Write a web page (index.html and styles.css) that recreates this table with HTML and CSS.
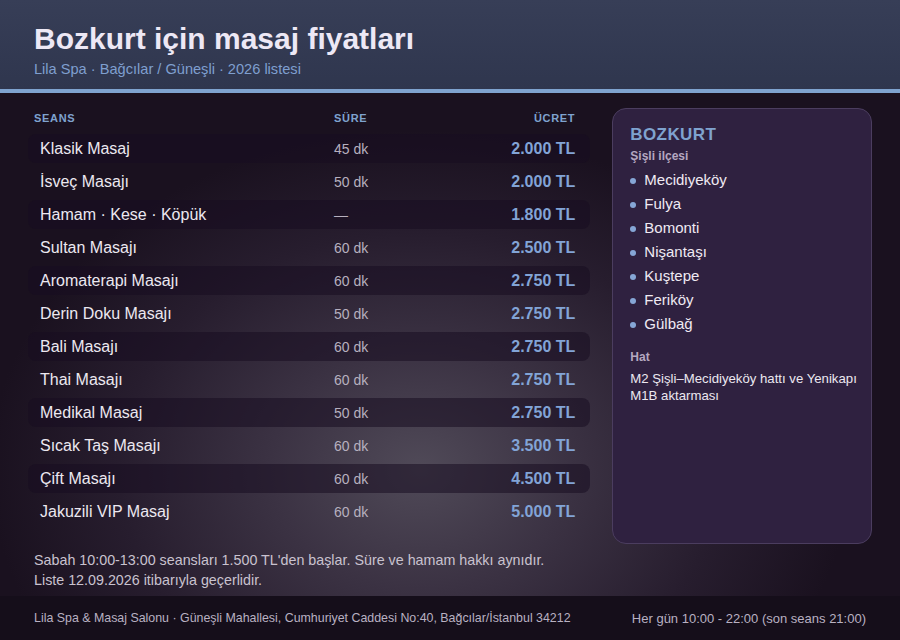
FILE: index.html
```html
<!DOCTYPE html>
<html lang="tr">
<head>
<meta charset="utf-8">
<link rel="stylesheet" href="styles.css">
</head>
<body>
<div class="page">
  <header class="header">
    <h1 class="title">Bozkurt için masaj fiyatları</h1>
    <div class="subtitle">Lila Spa · Bağcılar / Güneşli · 2026 listesi</div>
  </header>
  <main class="content">
    <section class="prices">
      <div class="row head">
        <span class="c-name">Seans</span><span class="c-dur">Süre</span><span class="c-price">Ücret</span>
      </div>
      <div class="row band"><span class="c-name">Klasik Masaj</span><span class="c-dur">45 dk</span><span class="c-price">2.000 TL</span></div>
      <div class="row"><span class="c-name">İsveç Masajı</span><span class="c-dur">50 dk</span><span class="c-price">2.000 TL</span></div>
      <div class="row band"><span class="c-name">Hamam · Kese · Köpük</span><span class="c-dur">—</span><span class="c-price">1.800 TL</span></div>
      <div class="row"><span class="c-name">Sultan Masajı</span><span class="c-dur">60 dk</span><span class="c-price">2.500 TL</span></div>
      <div class="row band"><span class="c-name">Aromaterapi Masajı</span><span class="c-dur">60 dk</span><span class="c-price">2.750 TL</span></div>
      <div class="row"><span class="c-name">Derin Doku Masajı</span><span class="c-dur">50 dk</span><span class="c-price">2.750 TL</span></div>
      <div class="row band"><span class="c-name">Bali Masajı</span><span class="c-dur">60 dk</span><span class="c-price">2.750 TL</span></div>
      <div class="row"><span class="c-name">Thai Masajı</span><span class="c-dur">60 dk</span><span class="c-price">2.750 TL</span></div>
      <div class="row band"><span class="c-name">Medikal Masaj</span><span class="c-dur">50 dk</span><span class="c-price">2.750 TL</span></div>
      <div class="row"><span class="c-name">Sıcak Taş Masajı</span><span class="c-dur">60 dk</span><span class="c-price">3.500 TL</span></div>
      <div class="row band"><span class="c-name">Çift Masajı</span><span class="c-dur">60 dk</span><span class="c-price">4.500 TL</span></div>
      <div class="row"><span class="c-name">Jakuzili VIP Masaj</span><span class="c-dur">60 dk</span><span class="c-price">5.000 TL</span></div>
    </section>
    <aside class="card">
      <div class="card-title">BOZKURT</div>
      <div class="card-label">Şişli ilçesi</div>
      <ul class="areas">
        <li>Mecidiyeköy</li>
        <li>Fulya</li>
        <li>Bomonti</li>
        <li>Nişantaşı</li>
        <li>Kuştepe</li>
        <li>Feriköy</li>
        <li>Gülbağ</li>
      </ul>
      <div class="card-label hat">Hat</div>
      <p class="line">M2 Şişli–Mecidiyeköy hattı ve Yenikapı M1B aktarması</p>
    </aside>
  </main>
  <div class="note">
    <p>Sabah 10:00-13:00 seansları 1.500 TL'den başlar. Süre ve hamam hakkı aynıdır.</p>
    <p>Liste 12.09.2026 itibarıyla geçerlidir.</p>
  </div>
  <footer class="footer">
    <span class="addr">Lila Spa &amp; Masaj Salonu · Güneşli Mahallesi, Cumhuriyet Caddesi No:40, Bağcılar/İstanbul 34212</span>
    <span class="hours">Her gün 10:00 - 22:00 (son seans 21:00)</span>
  </footer>
</div>
</body>
</html>
```

FILE: styles.css
```css
* { box-sizing: border-box; }
html, body { margin: 0; padding: 0; }
body {
  width: 900px;
  height: 640px;
  overflow: hidden;
  font-family: "Liberation Sans", Arial, sans-serif;
  background: #1a111f;
}
.page {
  width: 900px;
  height: 640px;
  display: flex;
  flex-direction: column;
  background:
    radial-gradient(ellipse 430px 340px at 420px 470px, #504a58 0%, #3b3243 35%, #271d2e 70%, #1a111f 100%);
}
.header {
  height: 93px;
  background: linear-gradient(180deg, #373e57 0%, #2f364e 100%);
  border-bottom: 4px solid #7fa3cf;
  padding: 22px 34px 0;
}
.title {
  margin: 0;
  font-size: 30px;
  line-height: 34px;
  font-weight: 700;
  color: #ede8f5;
}
.subtitle {
  margin-top: 4px;
  font-size: 14.6px;
  line-height: 18px;
  color: #7f9fcf;
}
.content {
  flex: 1;
  display: flex;
  gap: 22px;
  padding: 15px 28px 0;
}
.prices {
  width: 563px;
  display: flex;
  flex-direction: column;
  gap: 4px;
}
.row {
  display: flex;
  align-items: center;
  height: 29px;
  padding: 1px 15px 0 12px;
  border-radius: 8px;
}
.row.band {
  background: rgba(24, 12, 32, 0.55);
}
.row.head {
  height: 14px;
  margin: 3px 0 5px;
  padding: 0 15px 0 6px;
}
.row.head .c-name, .row.head .c-dur, .row.head .c-price {
  font-size: 11px;
  font-weight: 700;
  letter-spacing: 0.7px;
  text-transform: uppercase;
  color: #7fa3cf;
}
.row.head .c-name { width: 300px; }
.c-name {
  width: 294px;
  font-size: 16px;
  color: #ece8f0;
}
.c-dur {
  flex: 1;
  font-size: 14px;
  color: #b7b0bf;
}
.c-price {
  font-size: 16px;
  font-weight: 700;
  color: #82a4d6;
  text-align: right;
}
.card {
  width: 260px;
  background: #2f2140;
  border: 1px solid #4b3d5f;
  border-radius: 14px;
  padding: 16px 8px 16px 17px;
}
.card-title {
  font-size: 17px;
  line-height: 20px;
  font-weight: 700;
  letter-spacing: 0.4px;
  color: #7fa3cf;
}
.card-label {
  margin-top: 3px;
  font-size: 12px;
  line-height: 16px;
  font-weight: 700;
  color: #b5a8c0;
}
.card-label.hat { margin-top: 14px; }
.areas {
  list-style: none;
  margin: 3px 0 0;
  padding: 0;
}
.areas li {
  display: flex;
  align-items: center;
  height: 24px;
  font-size: 15px;
  color: #efeaf3;
}
.areas li::before {
  content: "";
  width: 6px;
  height: 6px;
  border-radius: 50%;
  background: #86a6d6;
  margin: 3px 8px 0 0;
}
.line {
  margin: 5px 0 0;
  font-size: 13.2px;
  line-height: 17px;
  color: #ece8f0;
}
.note {
  height: 52px;
  padding: 6px 34px 0;
}
.note p {
  margin: 0;
  font-size: 14.3px;
  line-height: 20px;
  color: #c9c2cf;
}
.footer {
  height: 44px;
  background: #150e1a;
  padding: 0 34px;
  display: flex;
  align-items: center;
  justify-content: space-between;
  color: #b9b1c2;
}
.addr { font-size: 12.4px; }
.hours { font-size: 13px; }
```
